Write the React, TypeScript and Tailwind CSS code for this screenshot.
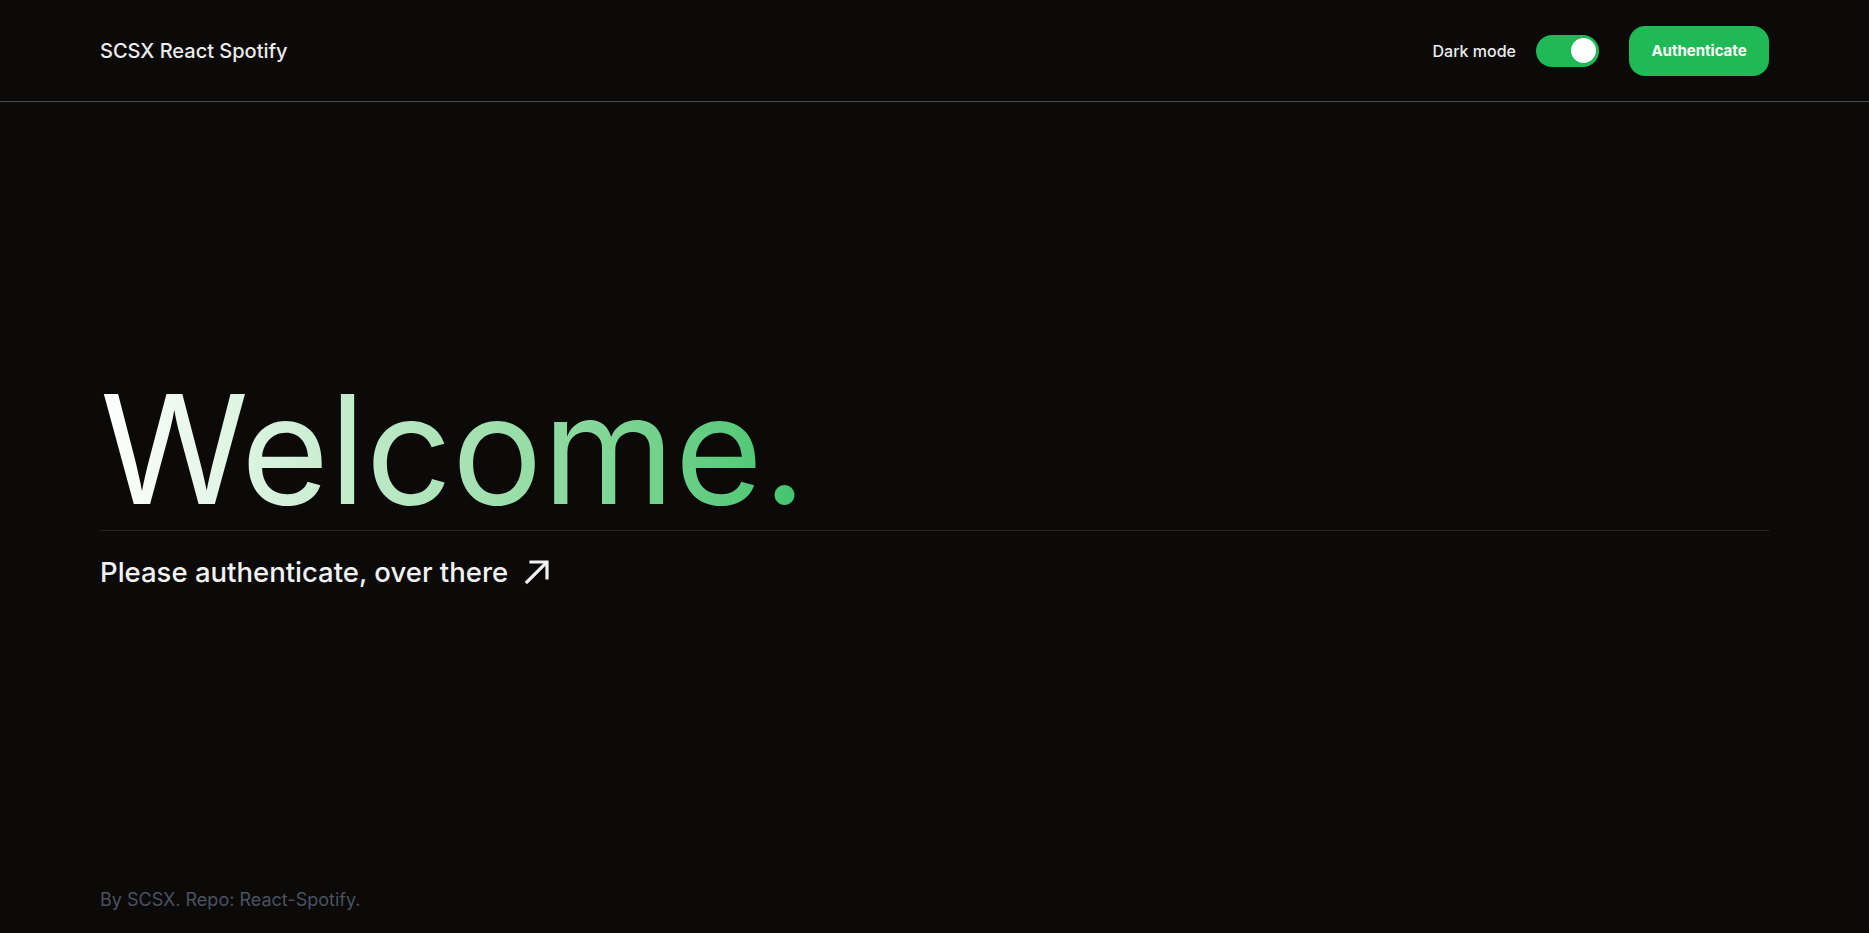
export default function App() {
  return (
    <div className="flex min-h-screen flex-col bg-[#0b0a09] font-['Inter','Liberation_Sans',sans-serif] text-[#ececec]">
      <header className="flex h-[102px] items-center justify-between border-b border-[#474c57] px-[100px]">
        <span className="text-[20px] font-medium">SCSX React Spotify</span>
        <div className="flex items-center">
          <span className="text-[16px] font-medium">Dark mode</span>
          <button className="ml-5 flex h-[32px] w-[63px] items-center justify-end rounded-full bg-[#1fb955] px-[3px]">
            <span className="block h-[25px] w-[25px] rounded-full bg-white" />
          </button>
          <button className="ml-[30px] h-[50px] w-[140px] rounded-2xl bg-[#1fb955] pt-px text-[15px] font-bold text-white">
            Authenticate
          </button>
        </div>
      </header>

      <main className="flex flex-1 flex-col px-[100px] pt-[272px]">
        <h1 className="leading-none">
          <span className="inline-block bg-gradient-to-r from-white to-[#3ec46c] bg-clip-text text-[151px] text-transparent">
            Welcome.
          </span>
        </h1>
        <div className="mt-[5px] h-px bg-[#272625]" />
        <p className="mt-[23px] flex items-center text-[27.5px] font-medium leading-9 text-[#f2f2f2]">
          Please authenticate, over there
          <svg className="ml-[16px]" width="26" height="26" viewBox="0 0 26 26" fill="none" stroke="#f2f2f2" strokeWidth="3.2" strokeLinecap="square">
            <path d="M3 23 22 4" />
            <path d="M7 3h16v16" />
          </svg>
        </p>
      </main>

      <footer className="px-[100px] pb-[19px] text-[18px] leading-7 text-[#4a5260]">
        By SCSX. Repo: React-Spotify.
      </footer>
    </div>
  );
}
